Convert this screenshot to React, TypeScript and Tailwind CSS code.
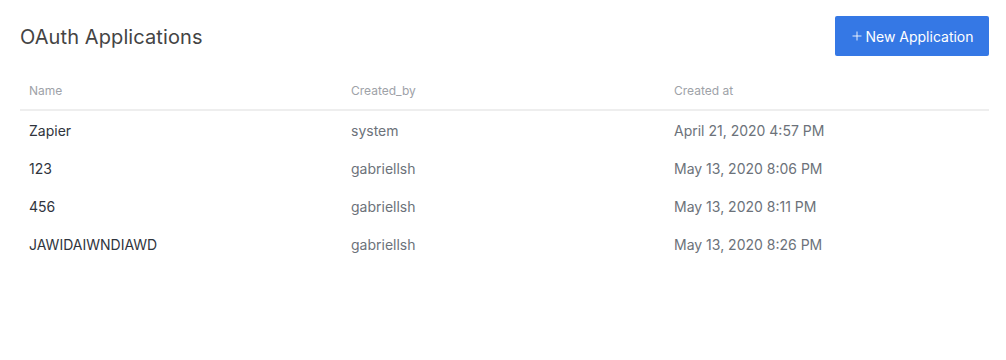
import { Plus } from "lucide-react";

const rows = [
  { name: "Zapier", by: "system", at: "April 21, 2020 4:57 PM" },
  { name: "123", by: "gabriellsh", at: "May 13, 2020 8:06 PM" },
  { name: "456", by: "gabriellsh", at: "May 13, 2020 8:11 PM" },
  { name: "JAWIDAIWNDIAWD", by: "gabriellsh", at: "May 13, 2020 8:26 PM" },
];

export default function App() {
  return (
    <div
      className="w-[1006px] h-[360px] bg-white pl-5 pr-[17px] pt-4"
      style={{ fontFamily: "Inter, 'Noto Sans', sans-serif" }}
    >
      <div className="flex items-center justify-between h-10">
        <h1 className="text-[20px] text-[#444] font-normal tracking-[0.1px] pt-[2px]">OAuth Applications</h1>
        <button className="flex items-center h-10 w-[154px] justify-center rounded-[2px] bg-[#3578e5] text-white text-[14px]">
          <Plus size={14} strokeWidth={1.5} className="mr-[1px]" />
          New Application
        </button>
      </div>

      <div className="mt-[17px]">
        <div className="grid grid-cols-3 h-[38px] items-center border-b-2 border-[#eeeeee] text-[12px] text-[#9ea2a8]">
          <div className="pl-[9px]">Name</div>
          <div className="pl-[8px]">Created_by</div>
          <div className="pl-[8px]">Created at</div>
        </div>
        {rows.map((r) => (
          <div key={r.name} className="grid grid-cols-3 h-[38px] items-center text-[14px]">
            <div className="pl-[9px] text-[#2f343d]">{r.name}</div>
            <div className="pl-[8px] text-[#6c727a]">{r.by}</div>
            <div className="pl-[8px] text-[#6c727a]">{r.at}</div>
          </div>
        ))}
      </div>
    </div>
  );
}
